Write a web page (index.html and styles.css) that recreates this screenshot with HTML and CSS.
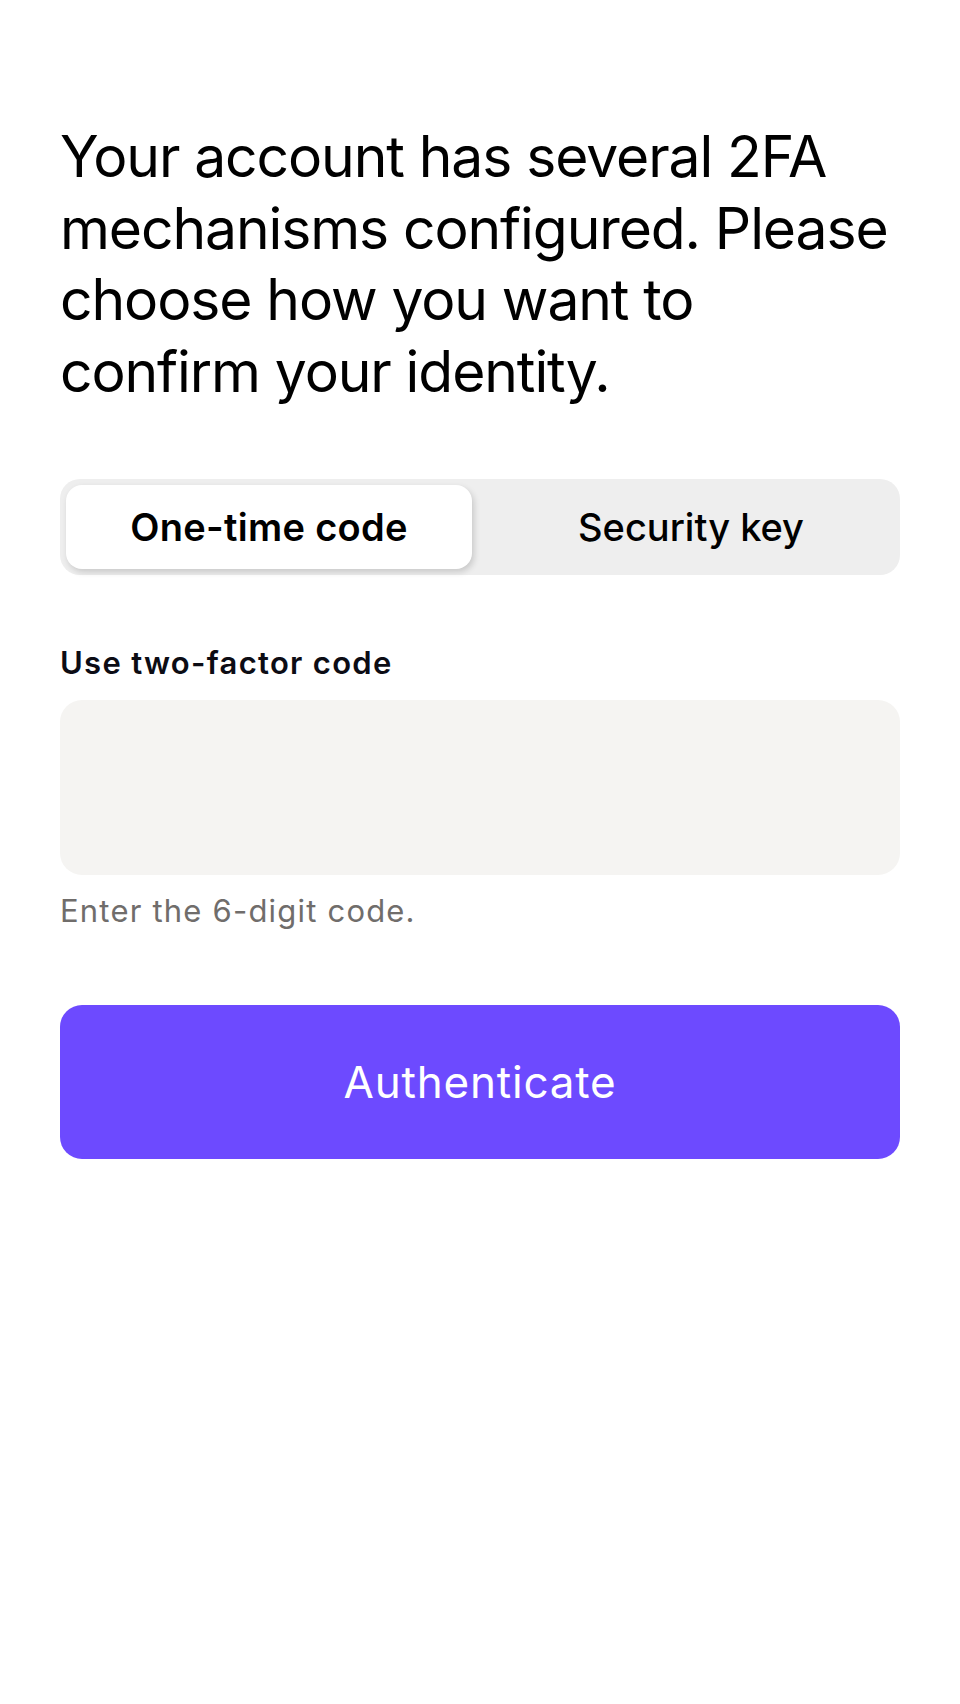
FILE: index.html
```html
<!DOCTYPE html>
<html lang="en">
<head>
<meta charset="utf-8">
<title>Two-factor authentication</title>
<link rel="stylesheet" href="styles.css">
</head>
<body>
<main class="page">
  <h1 class="title">Your account has several 2FA mechanisms configured. Please choose how you want to confirm your identity.</h1>
  <div class="segmented">
    <div class="seg seg-active">One-time code</div>
    <div class="seg">Security key</div>
  </div>
  <div class="field">
    <label class="label">Use two-factor code</label>
    <div class="input"></div>
    <p class="hint">Enter the 6-digit code.</p>
  </div>
  <button class="btn">Authenticate</button>
</main>
</body>
</html>
```

FILE: styles.css
```css
* { box-sizing: border-box; }
html, body { margin: 0; padding: 0; background: #ffffff; }
body {
  font-family: Inter, "Noto Sans", sans-serif;
  color: #000;
}
.page {
  padding: 121px 60px 0 60px;
  display: flex;
  flex-direction: column;
}
.title {
  margin: 0;
  font-size: 57px;
  line-height: 71.5px;
  font-weight: 400;
  letter-spacing: -1.1px;
  color: #000;
}
.segmented {
  margin-top: 72px;
  height: 96px;
  background: #eeeeee;
  border-radius: 20px;
  padding: 6px;
  display: grid;
  grid-template-columns: 1fr 1fr;
  gap: 16px;
}
.seg {
  display: flex;
  align-items: center;
  justify-content: center;
  font-size: 38px;
  font-weight: 500;
  color: #000;
  border-radius: 16px;
}
.seg-active {
  background: #fff;
  font-weight: 600;
  letter-spacing: 0.3px;
  box-shadow: 2px 3px 6px rgba(0,0,0,0.16);
}
.field {
  margin-top: 70px;
  display: flex;
  flex-direction: column;
}
.label {
  font-size: 31px;
  font-weight: 600;
  letter-spacing: 1.3px;
  color: #0c0c14;
  line-height: 36px;
}
.input {
  margin-top: 19px;
  height: 175px;
  background: #f5f4f2;
  border-radius: 22px;
}
.hint {
  margin: 18px 0 0 0;
  font-size: 31px;
  letter-spacing: 1.2px;
  line-height: 36px;
  color: #706d6b;
}
.btn {
  margin-top: 76px;
  height: 154px;
  border: none;
  border-radius: 22px;
  background: #6d4aff;
  color: #fff;
  font-family: Inter, "Noto Sans", sans-serif;
  font-size: 44px;
  letter-spacing: 0.8px;
  font-weight: 400;
}
```
